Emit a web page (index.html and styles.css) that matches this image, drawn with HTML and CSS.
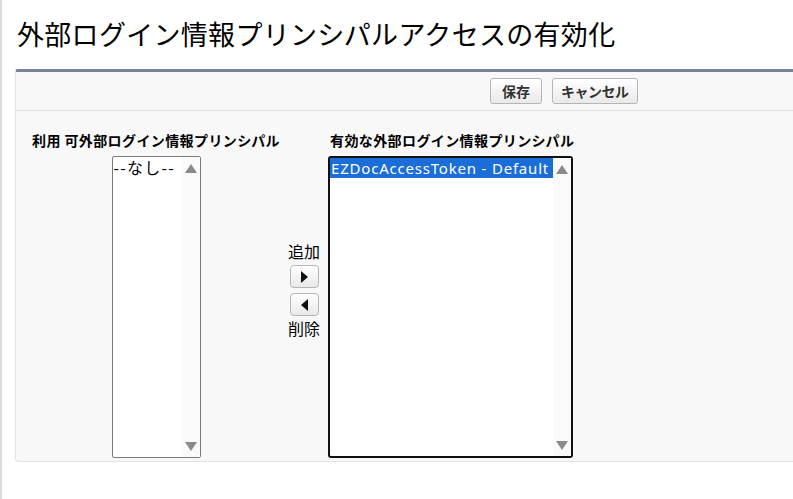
FILE: index.html
```html
<!DOCTYPE html>
<html lang="ja">
<head>
<meta charset="utf-8">
<title>外部ログイン情報プリンシパルアクセスの有効化</title>
<link rel="stylesheet" href="styles.css">
</head>
<body>
<div class="page">
  <h1 class="title">外部ログイン情報プリンシパルアクセスの有効化</h1>
  <div class="panel">
    <div class="btnbar">
      <button class="btn">保存</button>
      <button class="btn btn-narrow">キャンセル</button>
    </div>
    <div class="content">
      <div class="col col-left">
        <div class="label">利用 可外部ログイン情報プリンシパル</div>
        <div class="listbox listbox-left">
          <div class="items">
            <div class="item item-none">--なし--</div>
          </div>
          <div class="scroll">
            <span class="arrow-up"></span>
            <span class="arrow-down"></span>
          </div>
        </div>
      </div>
      <div class="col col-mid">
        <div class="midlabel">追加</div>
        <button class="arrbtn"><span class="tri-right"></span></button>
        <button class="arrbtn"><span class="tri-left"></span></button>
        <div class="midlabel">削除</div>
      </div>
      <div class="col col-right">
        <div class="label label-right">有効な外部ログイン情報プリンシパル</div>
        <div class="listbox listbox-right">
          <div class="items">
            <div class="item selected">EZDocAccessToken - Default</div>
          </div>
          <div class="scroll">
            <span class="arrow-up"></span>
            <span class="arrow-down"></span>
          </div>
        </div>
      </div>
    </div>
  </div>
</div>
</body>
</html>
```

FILE: styles.css
```css
html, body {
  margin: 0;
  padding: 0;
  overflow: hidden;
  background: #ffffff;
}
body {
  font-family: "Noto Sans CJK JP", "Noto Sans", sans-serif;
  color: #000;
  border-left: 2px solid #dcdcdc;
  height: 499px;
  box-sizing: border-box;
}
.page {
  padding-left: 13px;
}
.title {
  margin: 0;
  padding: 14px 0 0 2px;
  height: 69px;
  box-sizing: border-box;
  font-size: 27px;
  line-height: 40px;
  font-weight: normal;
  letter-spacing: 0.3px;
  white-space: nowrap;
}
.panel {
  margin-right: -20px;
  background: #f8f8f8;
  border-top: 3px solid #7a8098;
  border-left: 1px solid #e3e3e3;
  border-bottom: 1px solid #e3e3e3;
  border-bottom-left-radius: 4px;
  border-top-left-radius: 3px;
}
.btnbar {
  display: flex;
  gap: 10px;
  padding: 6px 0 0 474px;
  height: 39px;
  box-sizing: border-box;
  border-bottom: 1px solid #dedede;
}
.btn {
  font-family: "Noto Sans CJK JP", sans-serif;
  font-weight: bold;
  font-size: 14px;
  color: #333;
  height: 26px;
  padding: 0 11px;
  line-height: 22px;
  border: 1px solid #b5b5b5;
  border-radius: 3px;
  background: linear-gradient(#ffffff, #e9e9e9);
}
.btn-narrow {
  padding: 0 8px;
  letter-spacing: -0.5px;
}
.content {
  display: grid;
  grid-template-columns: 248px 48px 250px;
  padding: 18px 0 3px 16px;
}
.col {
  display: flex;
  flex-direction: column;
}
.col-left {
  align-items: center;
}
.col-right {
  align-items: flex-start;
}
.label {
  font-weight: bold;
  font-size: 14px;
  line-height: 22px;
  white-space: nowrap;
  letter-spacing: 0.4px;
  margin-bottom: 5px;
}
.label-right {
  padding-left: 2px;
}
.listbox {
  display: flex;
  background: #fff;
  height: 302px;
  box-sizing: border-box;
}
.listbox-left {
  width: 89px;
  border: 1px solid #7a7a7a;
  border-radius: 2px;
}
.listbox-right {
  width: 245px;
  border: 2px solid #111;
  border-radius: 3px;
}
.items {
  flex: 1;
  min-width: 0;
}
.item {
  font-size: 15px;
  line-height: 20px;
  white-space: nowrap;
  padding-left: 2px;
}
.item-none {
  font-size: 16px;
  letter-spacing: 1.2px;
  padding-left: 1px;
}
.selected {
  background: #1b6dd7;
  color: #fff;
  font-family: "Noto Sans", sans-serif;
  letter-spacing: 0.8px;
  padding-left: 1px;
}
.scroll {
  width: 18px;
  flex: none;
  background: #fafafa;
  display: flex;
  flex-direction: column;
  justify-content: space-between;
  align-items: center;
  padding: 7px 0 6px;
  box-sizing: border-box;
}
.arrow-up {
  width: 0;
  height: 0;
  border-left: 6px solid transparent;
  border-right: 6px solid transparent;
  border-bottom: 9px solid #8a8a8a;
}
.arrow-down {
  width: 0;
  height: 0;
  border-left: 6px solid transparent;
  border-right: 6px solid transparent;
  border-top: 9px solid #8a8a8a;
}
.col-mid {
  align-items: center;
  justify-content: center;
  padding-bottom: 7px;
}
.midlabel {
  font-size: 16px;
  line-height: 21px;
}
.arrbtn {
  width: 29px;
  height: 23px;
  flex: none;
  margin: 3px 0 2px;
  padding: 0;
  border: 1px solid #b5b5b5;
  border-radius: 4px;
  background: linear-gradient(#ffffff, #e9e9e9);
  display: flex;
  align-items: center;
  justify-content: center;
}
.tri-right {
  width: 0;
  height: 0;
  border-top: 6px solid transparent;
  border-bottom: 6px solid transparent;
  border-left: 7px solid #111;
}
.tri-left {
  width: 0;
  height: 0;
  border-top: 6px solid transparent;
  border-bottom: 6px solid transparent;
  border-right: 7px solid #111;
}
```
